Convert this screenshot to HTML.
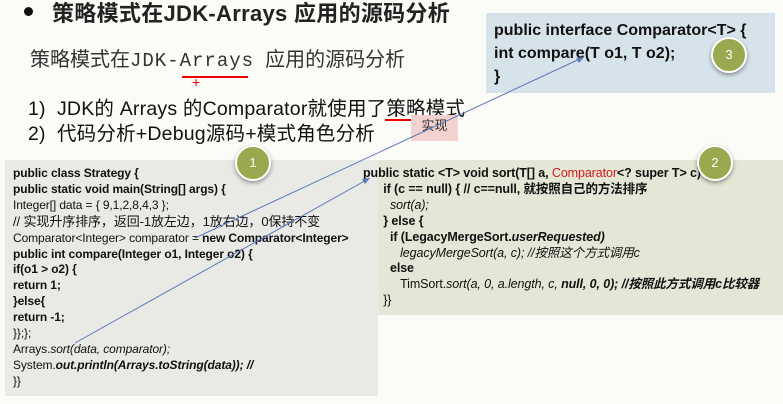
<!DOCTYPE html>
<html><head><meta charset="utf-8"><style>
body{margin:0;width:783px;height:404px;background:#fbfcf8;overflow:hidden;position:relative;font-family:"Liberation Sans","Noto Sans CJK SC",sans-serif;color:#111}
.a{position:absolute;white-space:nowrap}
.circ{position:absolute;width:32px;height:32px;border-radius:50%;background:#98a94f;border:2px solid #fff;box-shadow:0 2px 4px rgba(0,0,0,.4);color:#fff;font-size:13px;text-align:center;line-height:32px}
.code{font-size:12px;line-height:15.9px;letter-spacing:-0.1px}
b{font-weight:bold}
</style></head><body>
<div class="a" style="left:24px;top:7px;width:9px;height:9px;border-radius:50%;background:#111"></div>
<div class="a" style="left:52px;top:-4px;font-size:22px;font-weight:bold;color:#222;letter-spacing:0.3px">策略模式在JDK-Arrays 应用的源码分析</div>
<div class="a" style="left:30px;top:43px;font-size:20px;color:#333">策略模式在<span style="font-family:'Liberation Mono',monospace;font-size:19px;letter-spacing:1px">JDK-Arrays</span> &nbsp;应用的源码分析</div>
<div class="a" style="left:182px;top:76px;width:66px;height:2px;background:#e00"></div>
<div class="a" style="left:192px;top:74px;color:#e00;font-size:14px">+</div>
<div class="a" style="left:28px;top:92px;font-size:19.5px;letter-spacing:0.2px">1)&nbsp; JDK的 Arrays 的Comparator就使用了策略模式</div>
<div class="a" style="left:385px;top:119px;width:68px;height:2px;background:#e00"></div>
<div class="a" style="left:28px;top:117px;font-size:19.5px;letter-spacing:0.2px">2)&nbsp; 代码分析+Debug源码+模式角色分析</div>
<div class="a" style="left:411px;top:115px;width:47px;height:26px;background:#f1d2cf;font-size:13px;text-align:center;line-height:22px;color:#333">实现</div>

<div class="a" style="left:486px;top:13px;width:289px;height:80px;background:#d6e3ea"></div>
<div class="a" style="left:494px;top:19px;font-size:16px;font-weight:bold;line-height:23px">public interface Comparator&lt;T&gt; {<br>int compare(T o1, T o2);<br>}</div>
<div class="circ" style="left:711px;top:37px">3</div>

<div class="a" style="left:5px;top:160px;width:373px;height:236px;background:#e9e9e6"></div>
<div class="a" style="left:378px;top:160px;width:405px;height:155px;background:#e4e7d5"></div>
<div class="a code" style="left:13px;top:166px">
<b>public class Strategy {</b><br><b>public static void main(String[] args) {</b><br>Integer[] data = { 9,1,2,8,4,3 };<br><span style="font-size:13px">// 实现升序排序，返回-1放左边，1放右边，0保持不变</span><br>Comparator&lt;Integer&gt; comparator = <b>new Comparator&lt;Integer&gt;</b><br><b>public int compare(Integer o1, Integer o2) {</b><br><b>if(o1 &gt; o2) {</b><br><b>return 1;</b><br><b>}else{</b><br><b>return -1;</b><br>}};};<br>Arrays.<i>sort(data, comparator);</i><br>System.<b><i>out.println(Arrays.toString(data)); //</i></b><br>}}</div>
<div class="a code" style="left:363px;top:166px;font-size:12.5px">
<b>public static &lt;T&gt; void sort(T[] a, <span style="color:#d41a1a;font-weight:normal">Comparator</span>&lt;? super T&gt; c) {</b><br>
&nbsp;&nbsp;&nbsp;&nbsp;&nbsp;&nbsp;<b>if (c == null) { // c==null, 就按照自己的方法排序</b><br>
&nbsp;&nbsp;&nbsp;&nbsp;&nbsp;&nbsp;&nbsp;&nbsp;<i>sort(a);</i><br>
&nbsp;&nbsp;&nbsp;&nbsp;&nbsp;&nbsp;<b>} else {</b><br>
&nbsp;&nbsp;&nbsp;&nbsp;&nbsp;&nbsp;&nbsp;&nbsp;<b>if (LegacyMergeSort.<i>userRequested)</i></b><br>
&nbsp;&nbsp;&nbsp;&nbsp;&nbsp;&nbsp;&nbsp;&nbsp;&nbsp;&nbsp;&nbsp;<i>legacyMergeSort(a, c); //按照这个方式调用c</i><br>
&nbsp;&nbsp;&nbsp;&nbsp;&nbsp;&nbsp;&nbsp;&nbsp;<b>else</b><br>
&nbsp;&nbsp;&nbsp;&nbsp;&nbsp;&nbsp;&nbsp;&nbsp;&nbsp;&nbsp;&nbsp;TimSort.<i>sort(a, 0, a.length, c, <b>null, 0, 0); //按照此方式调用c比较器</b></i><br>
&nbsp;&nbsp;&nbsp;&nbsp;&nbsp;&nbsp;}}</div>
<div class="circ" style="left:235px;top:145px">1</div>
<div class="circ" style="left:697px;top:145px">2</div>
<svg class="a" style="left:0;top:0" width="783" height="404"><g stroke="#5a7ab8" stroke-width="1" fill="none"><line x1="195" y1="238" x2="584" y2="57"/><line x1="75" y1="343" x2="370" y2="178"/></g><path d="M584 57l-8 1 3 5z M370 178l-8 1 3 5z" fill="#5a7ab8"/></svg>
</body></html>
